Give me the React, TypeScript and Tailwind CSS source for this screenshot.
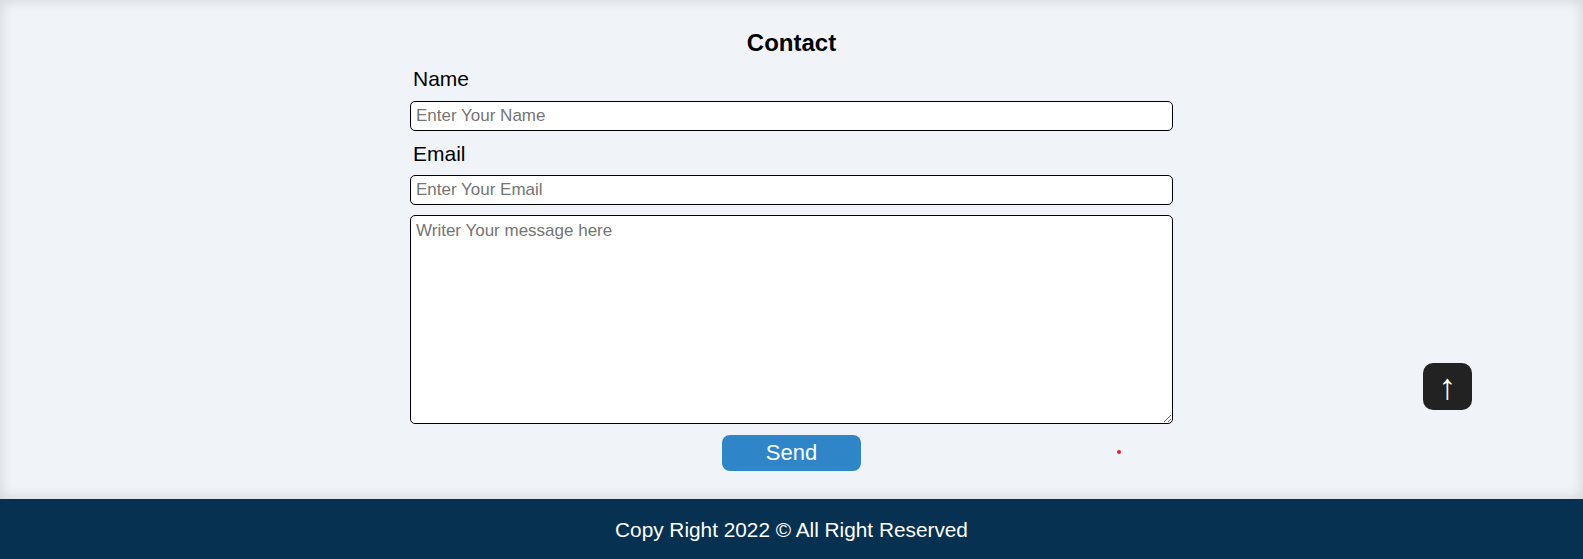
import React from 'react';

const App = () => {
    return (
        <div className="w-full font-['Liberation_Sans',Arial,sans-serif]">
            <section className="relative flex h-[499px] flex-col items-center bg-[#f0f4f8] shadow-[inset_0_0_14px_rgba(0,0,0,0.14)]">
                <form className="flex w-[763px] flex-col" onSubmit={(e) => e.preventDefault()}>
                    <h2 className="mt-[30px] text-center text-[24px] font-bold leading-[25px] text-black">Contact</h2>
                    <label className="mt-[12px] pl-[3px] text-[21px] leading-[23px] text-black">Name</label>
                    <input
                        type="text"
                        placeholder="Enter Your Name"
                        className="mt-[11px] h-[30px] rounded-[5px] border border-black bg-white px-[5px] text-[17px] text-black outline-none placeholder:text-[#757575]"
                    />
                    <label className="mt-[11px] pl-[3px] text-[21px] leading-[23px] text-black">Email</label>
                    <input
                        type="email"
                        placeholder="Enter Your Email"
                        className="mt-[10px] h-[30px] rounded-[5px] border border-black bg-white px-[5px] text-[17px] text-black outline-none placeholder:text-[#757575]"
                    />
                    <textarea
                        placeholder="Writer Your message here"
                        className="mt-[10px] h-[209px] rounded-[5px] border border-black bg-white px-[5px] py-[2px] text-[17px] text-black outline-none placeholder:text-[#757575]"
                    />
                    <button
                        type="submit"
                        className="mx-auto mt-[11px] h-[36px] w-[139px] rounded-[8px] bg-[#2e86c8] text-[22px] leading-none text-white"
                    >
                        Send
                    </button>
                </form>

                <span className="absolute left-[1117px] top-[450px] h-[4px] w-[4px] rounded-full bg-[#ee1c25]" />

                <button className="absolute left-[1423px] top-[363px] flex h-[47px] w-[49px] items-center justify-center rounded-[10px] bg-[#222222] text-[36px] leading-none text-white">
                    ↑
                </button>
            </section>

            <footer className="flex h-[60px] items-center justify-center bg-[#063150] pt-[2px]">
                <p className="text-[20.8px] text-white">Copy Right 2022 © All Right Reserved</p>
            </footer>
        </div>
    );
};

export default App;
